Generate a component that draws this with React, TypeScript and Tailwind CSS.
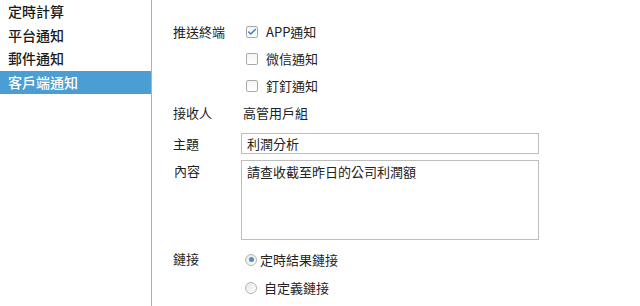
import { Check } from "lucide-react";

const FONT = { fontFamily: '"Noto Sans CJK TC", "Noto Sans", sans-serif' };

const MENU = ["定時計算", "平台通知", "郵件通知", "客戶端通知"];

function Checkbox({ checked }: { checked?: boolean }) {
  return (
    <span className="flex h-[12px] w-[12px] items-center justify-center rounded-[2px] border border-[#a9a9a9] bg-gradient-to-b from-[#f4f4f4] to-white">
      {checked && <Check className="h-[10px] w-[10px] text-[#3b7fc4]" strokeWidth={3.5} />}
    </span>
  );
}

function Radio({ checked }: { checked?: boolean }) {
  return (
    <span className="flex h-[12px] w-[12px] items-center justify-center rounded-full border border-[#b5b5b5] bg-gradient-to-br from-[#e6e6e6] to-white">
      {checked && <span className="h-[5px] w-[5px] rounded-full bg-[#4a90cf]" />}
    </span>
  );
}

export default function App() {
  return (
    <div className="flex h-[306px] w-[640px] bg-white text-[#222]" style={FONT}>
      {/* Sidebar */}
      <div className="w-[152px] shrink-0 border-r border-[#b0b0b0]">
        {MENU.map((item, i) => (
          <div
            key={item}
            className={
              "flex h-[23.5px] items-center pl-2 text-[14px] font-medium " +
              (i === 3 ? "bg-[#4a9ed3] text-white" : "text-[#1a1a1a]")
            }
          >
            {item}
          </div>
        ))}
      </div>

      {/* Form */}
      <div className="flex-1 pl-[21px] pt-[18px] text-[13px] text-[#222]">
        <div className="flex">
          <div className="flex h-[27px] w-[68px] items-center">推送終端</div>
          <div className="flex flex-col pl-[5px]">
            <label className="flex h-[27px] items-center gap-[8px]">
              <Checkbox checked />
              <span>APP通知</span>
            </label>
            <label className="flex h-[27px] items-center gap-[8px]">
              <Checkbox />
              <span>微信通知</span>
            </label>
            <label className="flex h-[27px] items-center gap-[8px]">
              <Checkbox />
              <span>釘釘通知</span>
            </label>
          </div>
        </div>

        <div className="flex h-[27px] items-center">
          <div className="w-[70px]">接收人</div>
          <div>高管用戶組</div>
        </div>

        <div className="mt-[7px] flex items-center">
          <div className="w-[68px]">主題</div>
          <div className="flex h-[21px] w-[298px] items-center border border-[#bdbdbd] px-[5px]">利潤分析</div>
        </div>

        <div className="mt-[6px] flex">
          <div className="w-[68px] pl-[1px] pt-[1px]">內容</div>
          <div className="h-[80px] w-[298px] border border-[#bdbdbd] px-[5px] pt-[1px]">
            請查收截至昨日的公司利潤額
          </div>
        </div>

        <div className="mt-[5px] flex">
          <div className="flex h-[27px] w-[70px] items-center">鏈接</div>
          <div className="flex flex-col pl-[2px]">
            <label className="flex h-[29px] items-center gap-[3px]">
              <Radio checked />
              <span>定時結果鏈接</span>
            </label>
            <label className="flex h-[27px] items-center gap-[7px]">
              <Radio />
              <span>自定義鏈接</span>
            </label>
          </div>
        </div>
      </div>
    </div>
  );
}
